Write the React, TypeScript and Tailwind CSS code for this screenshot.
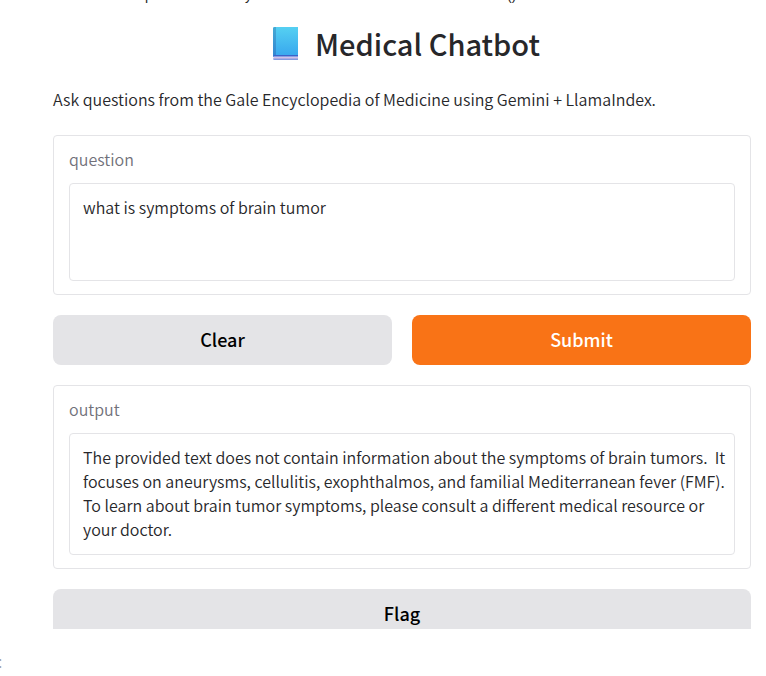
import { useState } from "react";

const secondaryButton =
  "h-[50px] bg-[#e4e4e7] pb-0.5 text-lg leading-6 font-medium text-black";

function BookIcon() {
  return (
    <svg width="26" height="34" viewBox="0 0 26 34" aria-hidden="true">
      <defs>
        <linearGradient id="cover" x1="0" y1="0" x2="0" y2="1">
          <stop offset="0" stopColor="#55d0f2" />
          <stop offset="1" stopColor="#37a6ee" />
        </linearGradient>
        <linearGradient id="spine" x1="0" y1="0" x2="0" y2="1">
          <stop offset="0" stopColor="#45a9d4" />
          <stop offset="1" stopColor="#3287d2" />
        </linearGradient>
      </defs>
      <path d="M2.5 1H26V31H1V2.500a1.500 1.500 0 0 1 1.500-1.500z" fill="url(#cover)" />
      <path d="M2.500 1H4V30H1V2.500a1.500 1.500 0 0 1 1.500-1.500z" fill="url(#spine)" />
      <path d="M2.500 29H26v1.500H1a2 2 0 0 1 1.500-1.500z" fill="#3d62c9" />
      <path d="M1.500 30.500H26V33H1.500z" fill="#d3bfe9" />
      <path d="M1 32.500H26V34H2.500a1.500 1.500 0 0 1-1.500-1.500z" fill="#839be0" />
    </svg>
  );
}

type FieldProps = {
  id: string;
  label: string;
  value: string;
  rows: number;
  readOnly?: boolean;
  onChange?: (value: string) => void;
};

function Field({ id, label, value, rows, readOnly, onChange }: FieldProps) {
  return (
    <div className="flex flex-col gap-3 rounded border border-[#e4e4e7] px-[15px] pt-[11px] pb-[13px]">
      <label htmlFor={id} className="text-base leading-6 text-[#71717a]">
        {label}
      </label>
      <textarea
        id={id}
        rows={rows}
        value={value}
        readOnly={readOnly}
        onChange={(e) => onChange?.(e.target.value)}
        className="block w-full resize-none overflow-hidden rounded border border-[#e4e4e7] pt-[11px] pr-2 pb-[13px] pl-[13px] text-base leading-6 text-[#27272a] outline-none"
      />
    </div>
  );
}

export default function App() {
  const [question, setQuestion] = useState("what is symptoms of brain tumor");
  const [output, setOutput] = useState(
    "The provided text does not contain information about the symptoms of brain tumors.  It focuses on aneurysms, cellulitis, exophthalmos, and familial Mediterranean fever (FMF).  To learn about brain tumor symptoms, please consult a different medical resource or your doctor.",
  );

  return (
    <div className="bg-white font-['Noto_Sans_CJK_SC',sans-serif] font-[350] text-[#27272a]">
      <div className="flex h-[3px] items-end overflow-hidden pl-[145px] font-['Liberation_Sans',sans-serif] text-sm leading-4">
        <span className="w-[100px]">p</span>
        <span className="w-[262px]">y</span>
        <span>()</span>
      </div>
      <main className="pr-[15px] pl-[53px]">
        <h1 className="flex items-center justify-center gap-[17px] pt-[18px] pl-2 text-[29px] leading-11 font-medium">
          <BookIcon />
          Medical Chatbot
        </h1>
        <p className="pt-[22px] text-base leading-6">
          Ask questions from the Gale Encyclopedia of Medicine using Gemini + LlamaIndex.
        </p>
        <form
          className="flex flex-col gap-5 pt-6"
          onSubmit={(e) => e.preventDefault()}
        >
          <Field id="question" label="question" rows={3} value={question} onChange={setQuestion} />
          <div className="grid grid-cols-2 gap-5">
            <button
              type="button"
              className={`${secondaryButton} rounded-lg`}
              onClick={() => {
                setQuestion("");
                setOutput("");
              }}
            >
              Clear
            </button>
            <button
              type="submit"
              className="h-[50px] rounded-lg bg-[#f97316] pb-0.5 text-lg leading-6 font-medium text-white"
            >
              Submit
            </button>
          </div>
          <Field id="output" label="output" rows={4} value={output} readOnly />
          <div className="h-10 overflow-hidden">
            <button type="button" className={`${secondaryButton} w-full rounded-lg`}>
              Flag
            </button>
          </div>
        </form>
      </main>
      <footer className="-ml-0.5 pt-5 text-base leading-6 text-[#a1a1aa]">:</footer>
    </div>
  );
}
